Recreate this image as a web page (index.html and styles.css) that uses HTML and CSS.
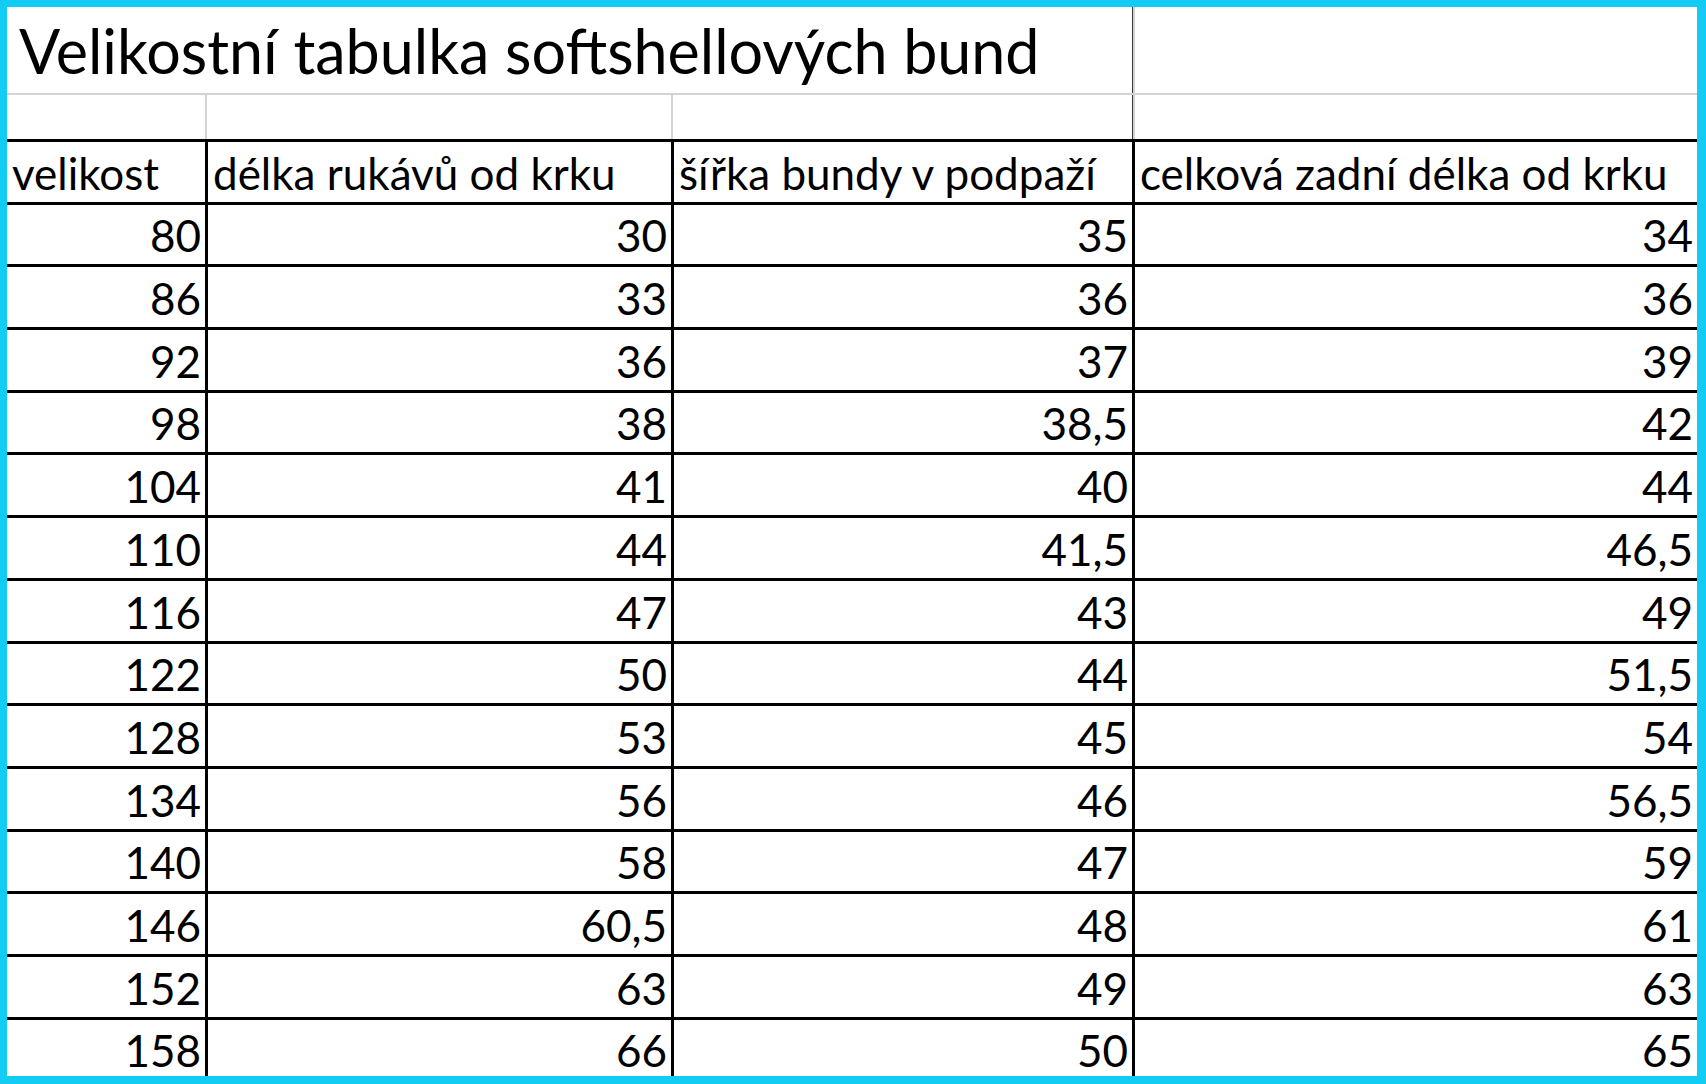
FILE: index.html
```html
<!DOCTYPE html>
<html lang="cs">
<head>
<meta charset="utf-8">
<title>Velikostní tabulka softshellových bund</title>
<link rel="stylesheet" href="styles.css">
</head>
<body>
<div class="frame">
  <div class="title-row">
    <div class="title-cell">Velikostní tabulka softshellových bund</div>
    <div class="title-extra"></div>
  </div>
  <div class="blank-row">
    <div class="b1"></div><div class="b2"></div><div class="b3"></div><div class="b4"></div>
  </div>
  <div class="sheet">
    <div class="row head"><div class="cell">velikost</div><div class="cell">délka rukávů od krku</div><div class="cell">šířka bundy v podpaží</div><div class="cell">celková zadní délka od krku</div></div>
    <div class="row"><div class="cell">80</div><div class="cell">30</div><div class="cell">35</div><div class="cell">34</div></div>
    <div class="row"><div class="cell">86</div><div class="cell">33</div><div class="cell">36</div><div class="cell">36</div></div>
    <div class="row"><div class="cell">92</div><div class="cell">36</div><div class="cell">37</div><div class="cell">39</div></div>
    <div class="row"><div class="cell">98</div><div class="cell">38</div><div class="cell">38,5</div><div class="cell">42</div></div>
    <div class="row"><div class="cell">104</div><div class="cell">41</div><div class="cell">40</div><div class="cell">44</div></div>
    <div class="row"><div class="cell">110</div><div class="cell">44</div><div class="cell">41,5</div><div class="cell">46,5</div></div>
    <div class="row"><div class="cell">116</div><div class="cell">47</div><div class="cell">43</div><div class="cell">49</div></div>
    <div class="row"><div class="cell">122</div><div class="cell">50</div><div class="cell">44</div><div class="cell">51,5</div></div>
    <div class="row"><div class="cell">128</div><div class="cell">53</div><div class="cell">45</div><div class="cell">54</div></div>
    <div class="row"><div class="cell">134</div><div class="cell">56</div><div class="cell">46</div><div class="cell">56,5</div></div>
    <div class="row"><div class="cell">140</div><div class="cell">58</div><div class="cell">47</div><div class="cell">59</div></div>
    <div class="row"><div class="cell">146</div><div class="cell">60,5</div><div class="cell">48</div><div class="cell">61</div></div>
    <div class="row"><div class="cell">152</div><div class="cell">63</div><div class="cell">49</div><div class="cell">63</div></div>
    <div class="row"><div class="cell">158</div><div class="cell">66</div><div class="cell">50</div><div class="cell">65</div></div>
  </div>
</div>
</body>
</html>
```
FILE: styles.css
```css
html, body {
  margin: 0;
  padding: 0;
  background: #ffffff;
}

.frame {
  box-sizing: border-box;
  width: 1706px;
  height: 1084px;
  border-style: solid;
  border-color: #12ccf3;
  border-width: 7px 9px 8px 7px;
  overflow: hidden;
  background: #ffffff;
  font-family: "Lato", "Liberation Sans", sans-serif;
  color: #000000;
}

.title-row {
  box-sizing: border-box;
  height: 87.5px;
  display: grid;
  grid-template-columns: 1125px 1fr;
  border-bottom: 2px solid #d3d3d3;
}

.title-cell {
  font-size: 61px;
  line-height: 1;
  padding: 13px 0 0 12px;
  white-space: nowrap;
}

.title-extra {
  border-left: 1px solid #3a3a3a;
  box-shadow: inset 2px 0 0 #d3d3d3;
}

.blank-row {
  height: 44.5px;
  display: grid;
  grid-template-columns: 198px 466px 461px 1fr;
}

.b2, .b3 {
  border-left: 2px solid #d3d3d3;
}

.b4 {
  border-left: 1px solid #3a3a3a;
  box-shadow: inset 2px 0 0 #d3d3d3;
}

.sheet {
  display: flex;
  flex-direction: column;
}

.row {
  box-sizing: border-box;
  flex: 0 0 62.7px;
  height: 62.7px;
  display: grid;
  grid-template-columns: 198px 466px 461px 1fr;
  border-top: 3px solid #000000;
}

.cell {
  box-sizing: border-box;
  font-size: 44px;
  line-height: 1;
  display: flex;
  align-items: flex-end;
  justify-content: flex-end;
  padding: 0 4px 7px 0;
  white-space: nowrap;
}

.cell + .cell {
  border-left: 3px solid #000000;
}

.head .cell {
  justify-content: flex-start;
  padding-left: 5px;
  padding-right: 0;
}
```
